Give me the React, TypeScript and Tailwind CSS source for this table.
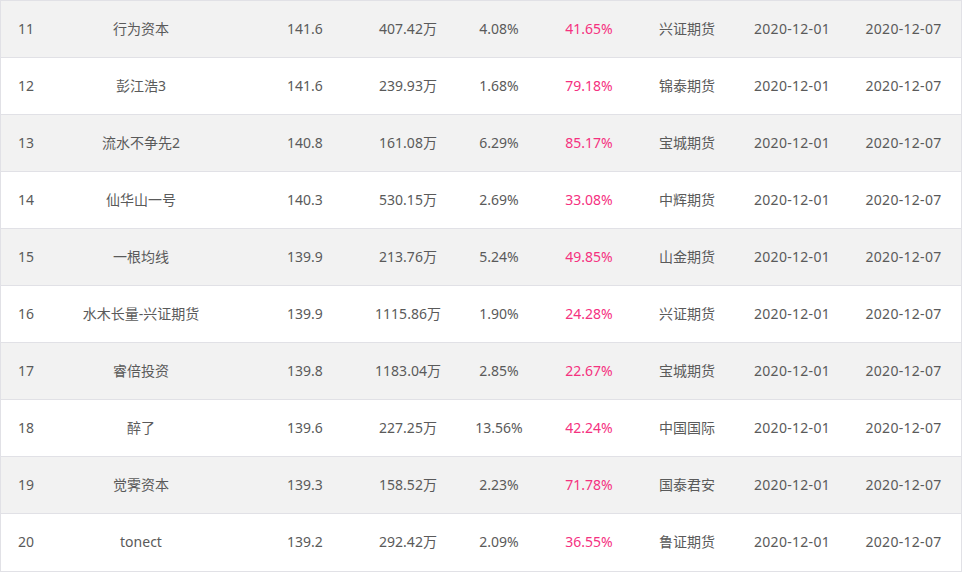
const ROWS = [
  { rank: 11, name: "行为资本", score: "141.6", scale: "407.42万", drawdown: "4.08%", ret: "41.65%", broker: "兴证期货", start: "2020-12-01", end: "2020-12-07" },
  { rank: 12, name: "彭江浩3", score: "141.6", scale: "239.93万", drawdown: "1.68%", ret: "79.18%", broker: "锦泰期货", start: "2020-12-01", end: "2020-12-07" },
  { rank: 13, name: "流水不争先2", score: "140.8", scale: "161.08万", drawdown: "6.29%", ret: "85.17%", broker: "宝城期货", start: "2020-12-01", end: "2020-12-07" },
  { rank: 14, name: "仙华山一号", score: "140.3", scale: "530.15万", drawdown: "2.69%", ret: "33.08%", broker: "中辉期货", start: "2020-12-01", end: "2020-12-07" },
  { rank: 15, name: "一根均线", score: "139.9", scale: "213.76万", drawdown: "5.24%", ret: "49.85%", broker: "山金期货", start: "2020-12-01", end: "2020-12-07" },
  { rank: 16, name: "水木长量-兴证期货", score: "139.9", scale: "1115.86万", drawdown: "1.90%", ret: "24.28%", broker: "兴证期货", start: "2020-12-01", end: "2020-12-07" },
  { rank: 17, name: "睿倍投资", score: "139.8", scale: "1183.04万", drawdown: "2.85%", ret: "22.67%", broker: "宝城期货", start: "2020-12-01", end: "2020-12-07" },
  { rank: 18, name: "醉了", score: "139.6", scale: "227.25万", drawdown: "13.56%", ret: "42.24%", broker: "中国国际", start: "2020-12-01", end: "2020-12-07" },
  { rank: 19, name: "觉霁资本", score: "139.3", scale: "158.52万", drawdown: "2.23%", ret: "71.78%", broker: "国泰君安", start: "2020-12-01", end: "2020-12-07" },
  { rank: 20, name: "tonect", score: "139.2", scale: "292.42万", drawdown: "2.09%", ret: "36.55%", broker: "鲁证期货", start: "2020-12-01", end: "2020-12-07" },
];

const App = () => {
  return (
    <div
      className="w-[962px] border border-[#e1e1e6] text-[14px] text-[#5a5a5a]"
      style={{ fontFamily: '"Noto Sans", "Noto Sans CJK SC", sans-serif' }}
    >
      {ROWS.map((row, i) => (
        <div
          key={row.rank}
          className={`grid grid-cols-[31px_218px_110px_96px_86px_94px_102px_108px_115px] h-[57px] pb-[2px] items-center text-center whitespace-nowrap ${
            i < ROWS.length - 1 ? "border-b border-[#e1e1e6]" : ""
          } ${i % 2 === 0 ? "bg-[#f2f2f2]" : "bg-white"}`}
        >
          <span className="text-left pl-[17px]">{row.rank}</span>
          <span>{row.name}</span>
          <span>{row.score}</span>
          <span>{row.scale}</span>
          <span>{row.drawdown}</span>
          <span className="text-[#f5317f]">{row.ret}</span>
          <span>{row.broker}</span>
          <span className="tracking-[0.3px]">{row.start}</span>
          <span className="tracking-[0.3px]">{row.end}</span>
        </div>
      ))}
    </div>
  );
};

export default App;
